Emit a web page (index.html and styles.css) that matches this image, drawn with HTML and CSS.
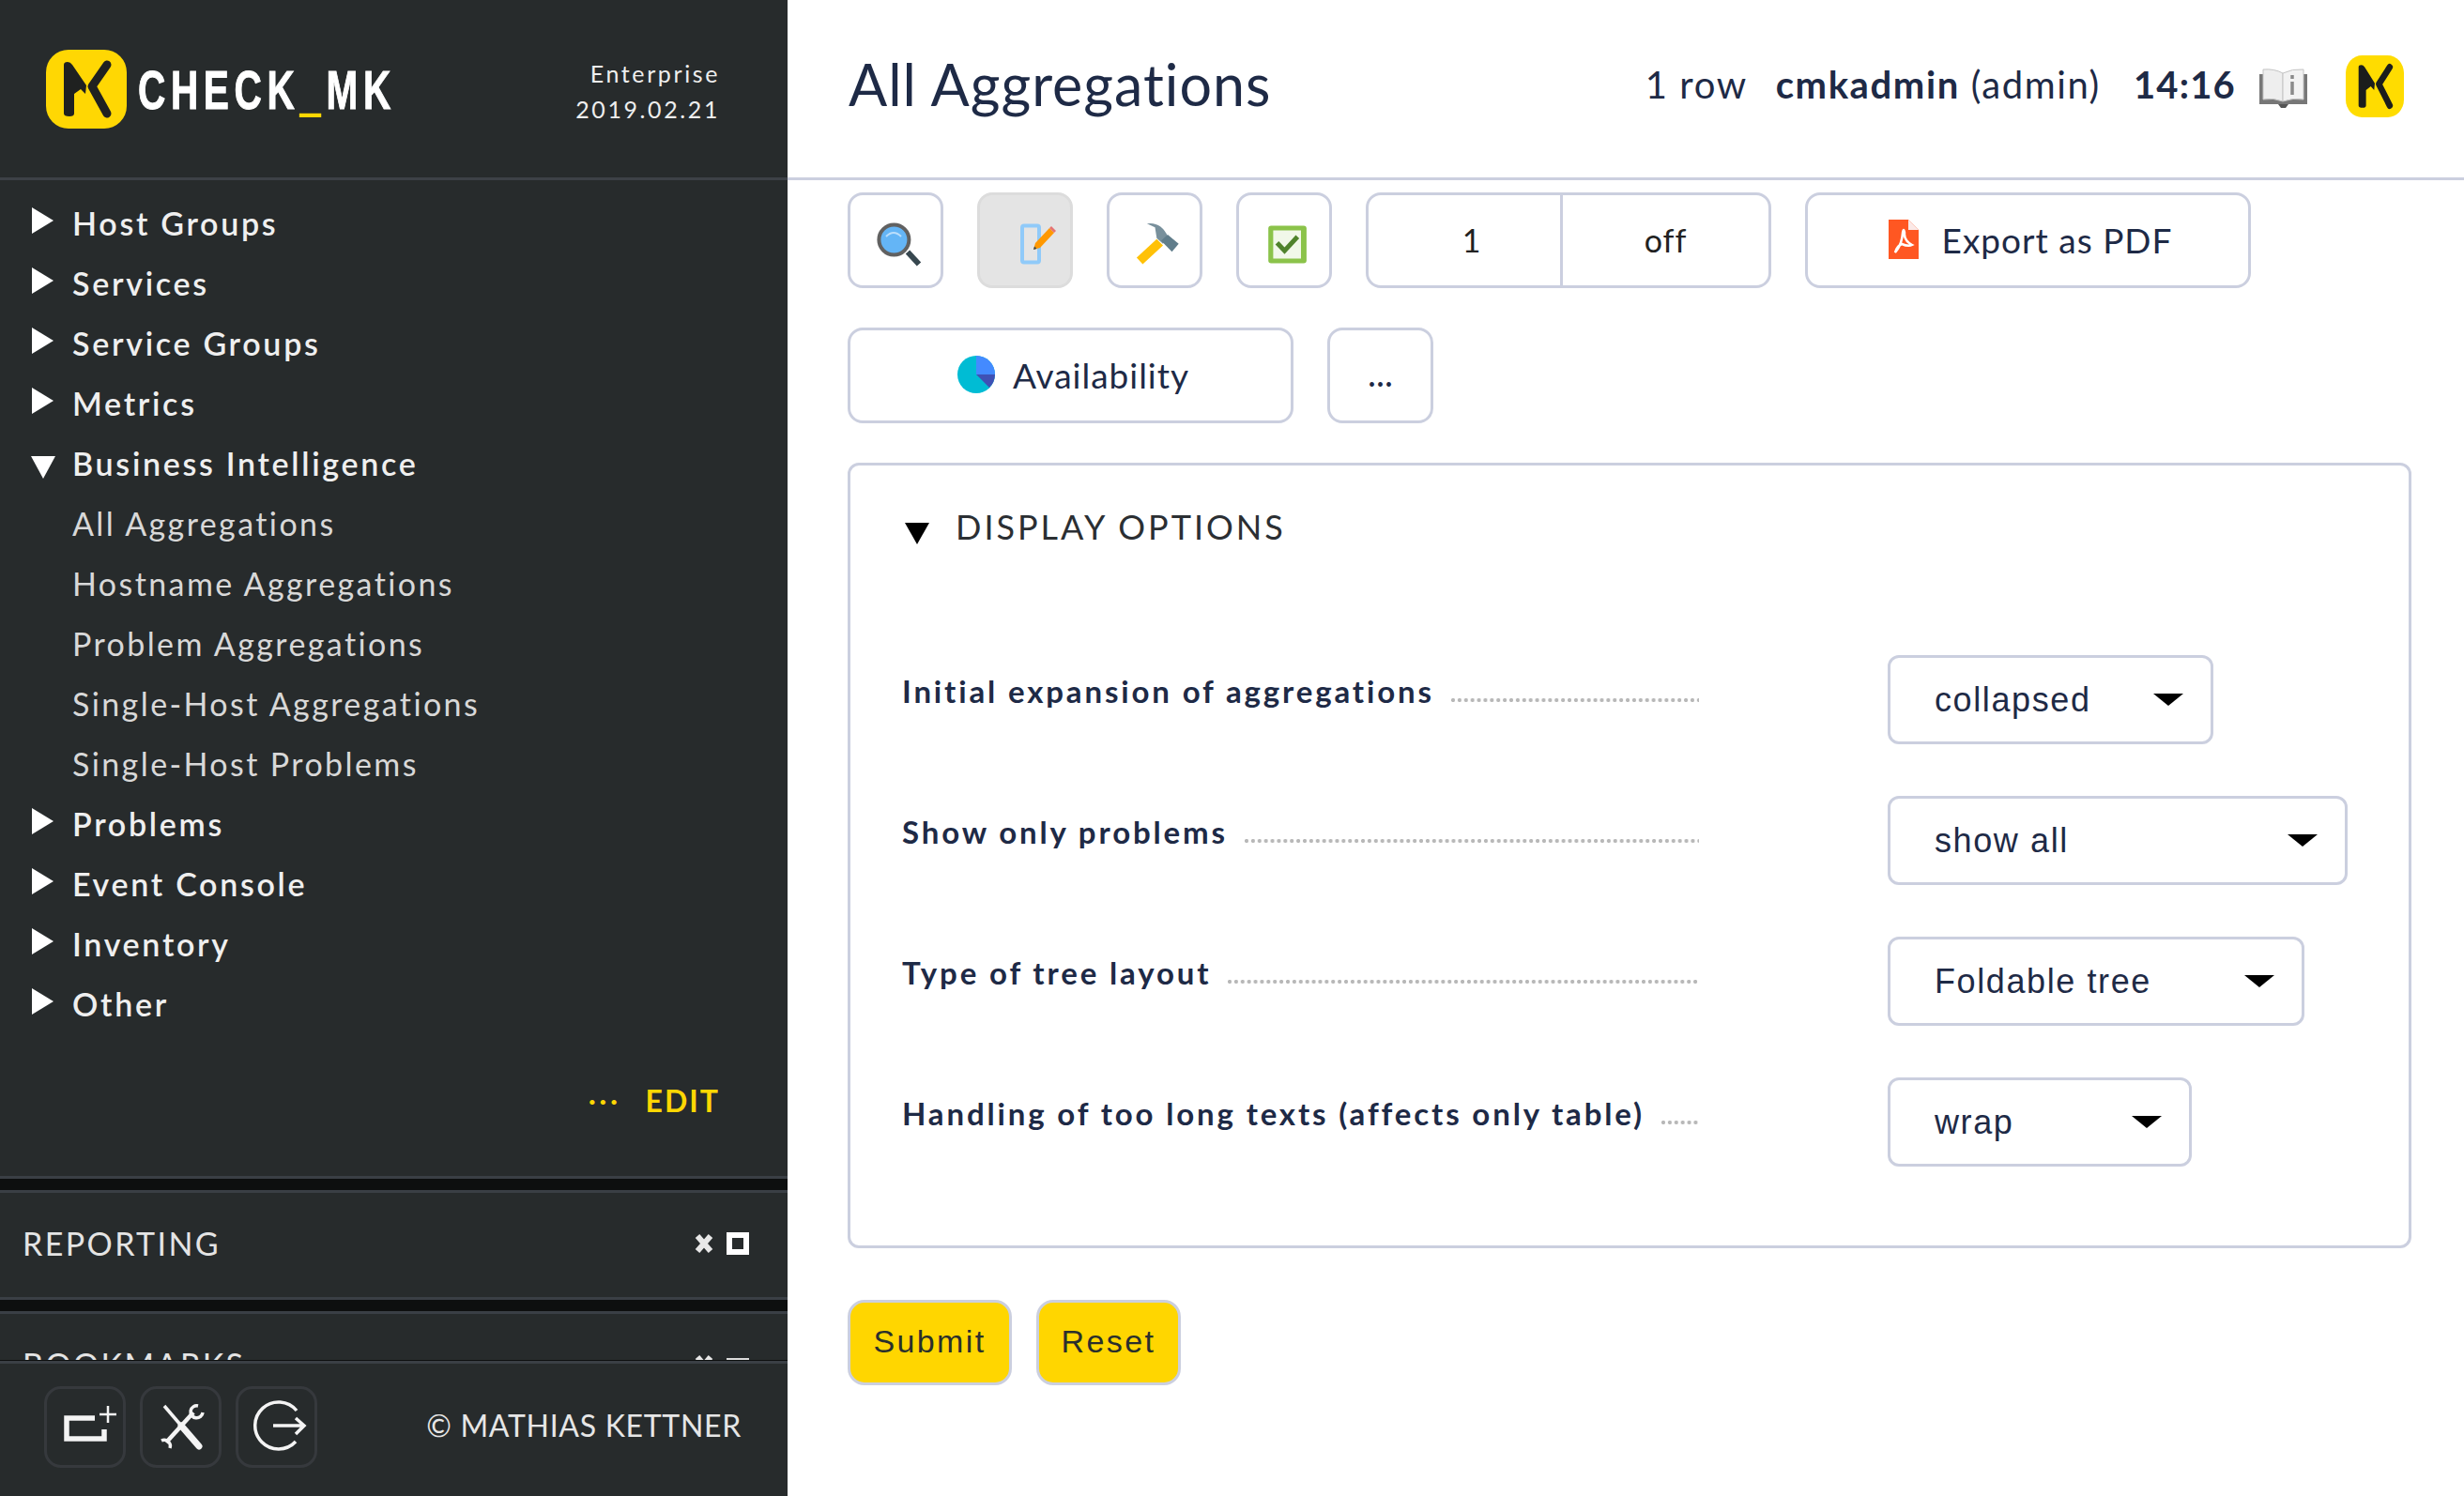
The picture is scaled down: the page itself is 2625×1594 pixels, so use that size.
FILE: index.html
```html
<!DOCTYPE html>
<html lang="en">
<head>
<meta charset="utf-8">
<title>All Aggregations</title>
<link rel="stylesheet" href="styles.css">
</head>
<body>
<div class="app">
  <aside class="sidebar">
    <header class="brand">
      <div class="brand-logo">
        <svg class="logo-mark" viewBox="0 0 86 84"><rect width="86" height="84" rx="24" fill="#ffd703"/><path d="M19 16 Q19 13 23 13 Q26 13 28 16 L43 38 L42 47 L37 42 L30 47 V68 Q30 71 25 71 Q19 71 19 68 Z" fill="#1f2120"/><path d="M65 16 L49 39 L65 68" fill="none" stroke="#1f2120" stroke-width="9" stroke-linecap="round" stroke-linejoin="round"/></svg>
        <span class="logo-text">CHECK<span class="logo-us">_</span>MK</span>
      </div>
      <div class="brand-meta"><div>Enterprise</div><div>2019.02.21</div></div>
    </header>
    <div class="snapins">
      <section class="snapin-main">
        <nav class="tree">
          <div class="tree-item"><span class="tri"></span>Host Groups</div>
          <div class="tree-item"><span class="tri"></span>Services</div>
          <div class="tree-item"><span class="tri"></span>Service Groups</div>
          <div class="tree-item"><span class="tri"></span>Metrics</div>
          <div class="tree-item"><span class="tri tri-open"></span>Business Intelligence</div>
          <div class="tree-sub">All Aggregations</div>
          <div class="tree-sub">Hostname Aggregations</div>
          <div class="tree-sub">Problem Aggregations</div>
          <div class="tree-sub">Single-Host Aggregations</div>
          <div class="tree-sub">Single-Host Problems</div>
          <div class="tree-item"><span class="tri"></span>Problems</div>
          <div class="tree-item"><span class="tri"></span>Event Console</div>
          <div class="tree-item"><span class="tri"></span>Inventory</div>
          <div class="tree-item"><span class="tri"></span>Other</div>
        </nav>
        <div class="edit-row"><span class="edit-dots">•••</span><span class="edit-link">EDIT</span></div>
      </section>
      <section class="snapin-head">
        <span>REPORTING</span>
        <span class="snapin-tools"><svg class="tool-x" viewBox="0 0 22 24"><path d="M4 4 L18 20 M18 4 L4 20" stroke="#e8e8e8" stroke-width="6"/></svg><span class="tool-box"></span></span>
      </section>
      <section class="snapin-head">
        <span>BOOKMARKS</span>
        <span class="snapin-tools"><svg class="tool-x" viewBox="0 0 22 24"><path d="M4 4 L18 20 M18 4 L4 20" stroke="#e8e8e8" stroke-width="6"/></svg><span class="tool-min"></span></span>
      </section>
    </div>
    <footer class="side-foot">
      <div class="foot-btns">
        <div class="foot-btn"><svg viewBox="3 3 81 81"><path d="M54 34 H24 V56 H64 V46" fill="none" stroke="#f4f4f4" stroke-width="5.500"/><path d="M68 21 V39 M59 30 H77" stroke="#f4f4f4" stroke-width="2.500" fill="none"/></svg></div>
        <div class="foot-btn"><svg viewBox="3 3 81 81"><path d="M26 21 L44 42" stroke="#f4f4f4" stroke-width="3.500"/><path d="M44 42 L63 64" stroke="#f4f4f4" stroke-width="7" stroke-linecap="round"/><path d="M28 60 L57 28" stroke="#f4f4f4" stroke-width="4.500" fill="none"/><path d="M62 21 A6.500 6.500 0 1 0 67 28" fill="none" stroke="#f4f4f4" stroke-width="3.500"/><path d="M23 58 A6.500 6.500 0 0 0 32 66" fill="none" stroke="#f4f4f4" stroke-width="3.500" transform="rotate(180 27.500 62)"/></svg></div>
        <div class="foot-btn"><svg viewBox="3 3 81 81"><path d="M65 26 A 25 25 0 1 0 64 59" fill="none" stroke="#f4f4f4" stroke-width="3.500"/><path d="M40 42 H73 M64 34 L73 42 L64 51" fill="none" stroke="#f4f4f4" stroke-width="3.500"/></svg></div>
      </div>
      <div class="foot-copy">© MATHIAS KETTNER</div>
    </footer>
  </aside>
  <main class="main">
    <header class="top">
      <h1 class="title">All Aggregations</h1>
      <div class="top-info">
        <span class="rows">1 row</span>
        <span class="user"><b>cmkadmin</b> (admin)</span>
        <b class="clock">14:16</b>
        <svg class="book" viewBox="0 0 51 42"><path d="M0 6 H4 V32 H47 V6 H51 V38 H0 Z" fill="#777"/><path d="M4 1 Q16 0 25 5 V35 Q15 31 4 33 Z" fill="#eeeeee" stroke="#c4c4c4" stroke-width="1"/><path d="M25 5 Q35 0 47 1 V33 Q36 31 25 35 Z" fill="#f2f2f2" stroke="#c4c4c4" stroke-width="1"/><path d="M35 7 V11 M35 14 V28" stroke="#8a8a8a" stroke-width="3.500"/><path d="M20 38 H31 L28 42 H23 Z" fill="#555"/></svg>
        <svg class="top-logo" viewBox="0 0 86 84" preserveAspectRatio="none"><rect width="86" height="84" rx="24" fill="#ffdc00"/><path d="M19 16 Q19 13 23 13 Q26 13 28 16 L43 38 L42 47 L37 42 L30 47 V68 Q30 71 25 71 Q19 71 19 68 Z" fill="#1b1d1c"/><path d="M65 16 L49 39 L65 68" fill="none" stroke="#1b1d1c" stroke-width="9" stroke-linecap="round" stroke-linejoin="round"/></svg>
      </div>
    </header>
    <div class="content">
      <div class="btn-row">
        <div class="btn btn-icon"><svg class="ico" viewBox="0 0 48 48"><path d="M37 36.500 L49 49.500" stroke="#37474f" stroke-width="6"/><circle cx="22.400" cy="23.500" r="16" fill="#64b5f6" stroke="#616161" stroke-width="4"/><path d="M14 20 Q22 12 30 20" fill="none" stroke="#bbdefb" stroke-width="2"/></svg></div>
        <div class="btn btn-icon btn-active"><svg class="ico" viewBox="0 0 48 48"><rect x="21" y="8.500" width="18" height="39" rx="2" fill="none" stroke="#90caf9" stroke-width="4"/><path d="M33 34 L35 27 L50 11 L55 16 L40 32 Z" fill="#ff9800"/><path d="M50 11 L52 9 L57 14 L55 16 Z" fill="#e57373"/><path d="M33 34 L34 30.500 L36.500 33 Z" fill="#37474f"/></svg></div>
        <div class="btn btn-icon"><svg class="ico" viewBox="0 0 48 48"><path d="M4.900 42.500 L11.400 49.500 L33 29.500 L26.300 22.800 Z" fill="#ffc107"/><path d="M15.900 6.200 Q31 4 38.300 20.200 L33 27.800 L26.300 21.800 L24.500 10.200 Z" fill="#78909c"/><path d="M38 18 L49.700 27.800 L42.500 36.200 L31 24.500 Z" fill="#607d8b"/></svg></div>
        <div class="btn btn-icon"><svg class="ico" viewBox="0 0 48 48"><rect x="7.200" y="8.500" width="40.700" height="40" rx="3" fill="#8bc34a"/><rect x="12.400" y="13.500" width="29.600" height="30" fill="#f1f8e9"/><path d="M16.500 26.800 L24.500 35.200 L38.300 20.200" fill="none" stroke="#4f832c" stroke-width="5"/></svg></div>
        <div class="btn-split"><span class="split-a">1</span><span class="split-b">off</span></div>
        <div class="btn btn-wide btn-pdf"><svg class="pdf" viewBox="0 0 32 42"><path d="M0 0 H21 L32 11 V42 H0 Z" fill="#ff5722"/><path d="M21 0 L32 11 H21 Z" fill="#fbe9e7"/><path d="M7 35 Q14 27 15 14 Q16 8 17 14 Q16 22 25 27 Q21 29 14 26 Q9 28 7 35 Z" fill="none" stroke="#fff" stroke-width="2.500"/></svg><span>Export as PDF</span></div>
      </div>
      <div class="btn-row btn-row-2">
        <div class="btn btn-wide btn-avail"><svg class="pie" viewBox="0 0 42 40"><circle cx="21" cy="20" r="20" fill="#00bcd4"/><path d="M21 20 V0 A20 20 0 0 1 41 20 Z" fill="#448aff"/><path d="M21 20 H41 A20 20 0 0 1 35 34 Z" fill="#3f51b5"/></svg><span>Availability</span></div>
        <div class="btn btn-more">...</div>
      </div>
      <form class="panel">
        <div class="panel-head"><span class="panel-tri"></span>DISPLAY OPTIONS</div>
        <div class="form-row">
          <div class="label"><span>Initial expansion of aggregations</span><i class="dots"></i></div>
          <div class="select sel-1">collapsed<span class="caret"></span></div>
        </div>
        <div class="form-row">
          <div class="label"><span>Show only problems</span><i class="dots"></i></div>
          <div class="select sel-2">show all<span class="caret"></span></div>
        </div>
        <div class="form-row">
          <div class="label"><span>Type of tree layout</span><i class="dots"></i></div>
          <div class="select sel-3">Foldable tree<span class="caret"></span></div>
        </div>
        <div class="form-row">
          <div class="label"><span>Handling of too long texts (affects only table)</span><i class="dots"></i></div>
          <div class="select sel-4">wrap<span class="caret"></span></div>
        </div>
      </form>
      <div class="actions">
        <div class="yellow y-submit">Submit</div>
        <div class="yellow y-reset">Reset</div>
      </div>
    </div>
  </main>
</div>
</body>
</html>
```
FILE: styles.css
```css
* { box-sizing: border-box; }
html, body { margin: 0; height: 100%; overflow: hidden; }
body { font-family: "Lato", "Liberation Sans", sans-serif; font-variant-ligatures: common-ligatures; background: #fff; color: #1e2a46; }
.app { display: flex; width: 2625px; height: 1594px; overflow: hidden; }

/* sidebar */
.sidebar { width: 839px; flex: none; height: 1594px; display: flex; flex-direction: column; background: #272b2c; color: #efefef; }
.brand { height: 192px; flex: none; border-bottom: 3px solid #3d4147; padding: 53px 72px 0 49px; display: flex; justify-content: space-between; }
.brand-logo { display: flex; align-items: flex-start; }
.logo-mark { width: 86px; height: 84px; flex: none; }
.logo-text { font-family: "Liberation Sans", sans-serif; font-weight: 700; font-size: 58px; line-height: 66px; color: #fff; letter-spacing: 8px; margin: 10px 0 0 12px; transform: scaleX(.7); transform-origin: left center; white-space: nowrap; -webkit-text-stroke: 1px #fff; }
.logo-us { color: #ffd703; -webkit-text-stroke: 0; text-shadow: 0 2px 0 #ffd703; }
.brand-meta { text-align: right; font-size: 25px; letter-spacing: 2.6px; line-height: 38px; margin-top: 6px; color: #eee; }
.snapins { flex: 1; min-height: 0; overflow: hidden; background: #0d0f0f; }
.snapin-main { height: 1064px; border-bottom: 3px solid #3a3f45; padding-top: 14px; background: #272b2c; }
.tree-item, .tree-sub { height: 64px; line-height: 64px; font-size: 34px; white-space: nowrap; }
.tree-item { display: flex; align-items: center; padding-left: 34px; font-weight: 600; letter-spacing: 2.7px; }
.tree-sub { padding-left: 77px; font-weight: 400; letter-spacing: 2.4px; color: #d8d8d8; }
.tri { width: 0; height: 0; border-style: solid; border-width: 14px 0 14px 23px; border-color: transparent transparent transparent #fff; margin-right: 20px; margin-top: -6px; flex: none; }
.tri.tri-open { border-width: 24px 13px 0; border-color: #fff transparent transparent; margin: 7px 18px 0 -1px; }
.edit-row { display: flex; justify-content: flex-end; align-items: center; padding: 51px 72px 0 0; gap: 26px; }
.edit-dots { color: #ffd703; font-size: 14px; letter-spacing: 3.5px; }
.edit-link { color: #ffd703; font-size: 32px; font-weight: 700; letter-spacing: 2px; line-height: 40px; }
.snapin-head { height: 117px; border-top: 3px solid #3a3f45; border-bottom: 3px solid #3a3f45; margin-top: 12px; display: flex; justify-content: space-between; align-items: center; padding: 0 41px 4px 24px; font-size: 34px; letter-spacing: 2.4px; color: #e4e4e4; background: #272b2c; }
.snapin-tools { display: flex; align-items: center; gap: 13px; }
.tool-x { width: 22px; height: 24px; }
.tool-box { width: 24px; height: 24px; background: #272b2c; border: 6px solid #fff; }
.tool-min { width: 24px; height: 24px; border-top: 4px solid #ddd; margin-top: 10px; display: block; }
.side-foot { height: 145px; flex: none; border-top: 1px solid #0d0f0f; box-shadow: inset 0 3px 0 #3a3f45; display: flex; align-items: center; justify-content: space-between; padding: 0 49px 0 47px; background: #272b2c; }
.foot-btns { display: flex; gap: 15px; }
.foot-btn { width: 87px; height: 87px; border: 3px solid #36393d; border-radius: 18px; margin-top: -4px; }
.foot-btn svg { display: block; width: 81px; height: 81px; }
.foot-copy { font-size: 32px; letter-spacing: .7px; color: #e6e6e6; margin-top: -7px; }

/* main */
.main { flex: 1; min-width: 0; display: flex; flex-direction: column; }
.top { height: 192px; flex: none; border-bottom: 3px solid #cbcfdf; display: flex; align-items: center; justify-content: space-between; padding: 0 64px 10px 65px; }
.title { margin: 0; font-size: 61px; font-weight: 400; letter-spacing: 1px; color: #1e2a46; }
.top-info { display: flex; align-items: center; font-size: 40px; letter-spacing: 1.6px; }
.rows { margin-right: 30px; }
.user { margin-right: 35px; }
.clock { margin-right: 25px; letter-spacing: 1.2px; }
.book { width: 51px; height: 42px; margin: 8px 41px 0 0; }
.top-logo { width: 62px; height: 66px; margin-top: 4px; }
.content { padding: 13px 56px 0 64px; }
.btn-row { display: flex; gap: 36px; }
.btn-row-2 { margin-top: 42px; }
.btn { height: 102px; border: 3px solid #cbcfdf; border-radius: 16px; display: flex; align-items: center; justify-content: center; background: #fff; }
.btn-icon { width: 102px; }
.btn-active { background: #e4e4e4; border-color: #dcdcdc; }
.ico { width: 48px; height: 48px; overflow: visible; }
.btn-split { width: 432px; height: 102px; border: 3px solid #cbcfdf; border-radius: 16px; display: flex; font-size: 34px; letter-spacing: 1px; color: #222; }
.split-a { width: 207px; border-right: 3px solid #cbcfdf; padding: 0 0 2px 16px; display: flex; align-items: center; justify-content: center; }
.split-b { flex: 1; padding-bottom: 2px; display: flex; align-items: center; justify-content: center; }
.btn-wide { width: 475px; font-size: 37px; letter-spacing: 1px; gap: 25px; padding: 0 0 2px 5px; }
.pdf { width: 32px; height: 42px; }
.pie { width: 42px; height: 40px; }
.btn-avail { gap: 18px; }
.btn-more { width: 113px; font-size: 38px; padding-bottom: 6px; }
.panel { margin-top: 42px; height: 837px; border: 3px solid #cbcfdf; border-radius: 12px; padding: 0 0 0 55px; }
.panel-head { display: flex; align-items: center; height: 50px; margin-top: 40px; font-size: 36px; letter-spacing: 3px; color: #2b2f33; }
.panel-tri { width: 0; height: 0; border-style: solid; border-width: 23px 13px 0; border-color: #000 transparent transparent; margin: 14px 28px 0 3px; }
.form-row { display: flex; align-items: center; height: 95px; margin-top: 55px; }
.panel-head + .form-row { margin-top: 112px; }
.label { width: 849px; flex: none; display: flex; align-items: center; font-size: 33px; font-weight: 700; letter-spacing: 2.85px; color: #1e2a46; white-space: nowrap; margin-top: -20px; }
.dots { flex: 1; height: 4px; margin: 21px 0 0 18px; background: radial-gradient(circle at 2px 2px, #b8b8b8 1.9px, transparent 2.3px) 0 0 / 6.9px 4px repeat-x; }
.select { margin-left: 201px; height: 95px; border: 3px solid #cbcfdf; border-radius: 12px; display: flex; align-items: center; justify-content: space-between; padding: 0 29px 0 47px; font-family: "Liberation Sans", sans-serif; font-size: 36px; letter-spacing: 1.6px; color: #1e2a46; }
.sel-1 { width: 347px; }
.sel-2 { width: 490px; }
.sel-3 { width: 444px; }
.sel-4 { width: 324px; }
.caret { width: 0; height: 0; border-style: solid; border-width: 13px 16px 0; border-color: #000 transparent transparent; }
.actions { display: flex; gap: 26px; margin-top: 55px; }
.yellow { height: 91px; border: 3px solid #cbcfdf; border-radius: 18px; background: #ffd600; display: flex; align-items: center; justify-content: center; padding-bottom: 2px; font-family: "Liberation Sans", sans-serif; font-size: 34px; letter-spacing: 2.4px; color: #2a2f2c; }
.y-submit { width: 175px; }
.y-reset { width: 154px; }
```
